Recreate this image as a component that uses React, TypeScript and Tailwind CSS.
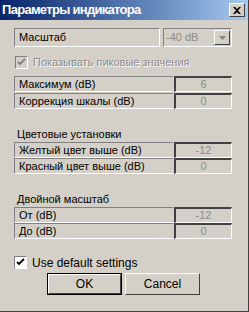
import React from "react";

const font = { fontFamily: '"Liberation Sans", Arial, sans-serif' };

function LabelRow({ label, value }: { label: string; value: string }) {
  return (
    <div className="flex h-[16px] items-stretch">
      <div className="w-[159px] border-t border-l border-t-[#808080] border-l-[#808080] border-b border-b-white flex items-center pl-[4px] text-[11px] text-black">
        {label}
      </div>
      <div className="w-[58px] ml-[1px] border-t-2 border-l-2 border-t-[#404040] border-l-[#404040] border-b border-r border-b-white border-r-white flex items-center justify-center text-[11px] text-[#8a8a8a]">
        {value}
      </div>
    </div>
  );
}

export default function App() {
  return (
    <div
      className="w-[249px] h-[312px] bg-[#d4d0c8] flex flex-col border-r border-b border-r-[#404040] border-b-[#404040] overflow-hidden"
      style={font}
    >
      <div className="h-[20px] bg-gradient-to-r from-[#0a246a] to-[#a6caf0] flex items-center justify-between pl-[2px] pr-[3px]">
        <span className="text-white font-bold text-[13px] tracking-[-0.7px]">Параметры индикатора</span>
        <div className="w-[16px] h-[14px] bg-[#d4d0c8] border border-t-white border-l-white border-b-[#404040] border-r-[#404040] flex items-center justify-center">
          <svg width="8" height="7" viewBox="0 0 8 7">
            <path d="M0 0 L2 0 L4 2 L6 0 L8 0 L5 3.5 L8 7 L6 7 L4 5 L2 7 L0 7 L3 3.5 Z" fill="black" />
          </svg>
        </div>
      </div>

      <div className="flex flex-col pl-[14px] pt-[8px]">
        <div className="flex h-[19px]">
          <div className="w-[146px] border-t border-l border-t-[#808080] border-l-[#808080] border-b border-r border-b-white border-r-white flex items-center pl-[4px] text-[11px] text-black">
            Масштаб
          </div>
          <div className="ml-[3px] w-[69px] border-t border-l border-t-[#808080] border-l-[#808080] border-b border-r border-b-white border-r-white flex items-center justify-between p-[1px]">
            <span className="text-[11px] text-[#8a8a8a] pl-[1px]">-40 dB</span>
            <div className="w-[16px] h-full bg-[#d4d0c8] border border-t-white border-l-white border-b-[#404040] border-r-[#404040] flex items-center justify-center">
              <svg width="7" height="4" viewBox="0 0 7 4">
                <path d="M0 0 L7 0 L3.5 4 Z" fill="#808080" />
              </svg>
            </div>
          </div>
        </div>

        <div className="flex items-center mt-[9px] h-[13px]">
          <div className="w-[13px] h-[13px] ml-[1px] border border-t-[#808080] border-l-[#808080] border-b-white border-r-white bg-[#d4d0c8] flex items-center justify-center">
            <svg width="9" height="9" viewBox="0 0 9 9">
              <path d="M1 4 L3 6 L8 1" stroke="#808080" strokeWidth="1.8" fill="none" />
            </svg>
          </div>
          <span className="ml-[5px] text-[11px] text-[#8a8a8a]" style={{ textShadow: "1px 1px 0 #fff" }}>
            Показывать пиковые значения
          </span>
        </div>

        <div className="flex flex-col mt-[7px]">
          <LabelRow label="Максимум (dB)" value="6" />
          <div className="h-[1px]" />
          <LabelRow label="Коррекция шкалы (dB)" value="0" />
        </div>

        <div className="text-[11px] text-black mt-[18px] pl-[3px] h-[14px] leading-[14px]">Цветовые установки</div>
        <div className="flex flex-col mt-[1px]">
          <LabelRow label="Желтый цвет выше (dB)" value="-12" />
          <LabelRow label="Красный цвет выше (dB)" value="0" />
        </div>

        <div className="text-[11px] text-black mt-[18px] pl-[3px] h-[14px] leading-[14px]">Двойной масштаб</div>
        <div className="flex flex-col mt-[1px]">
          <LabelRow label="От (dB)" value="-12" />
          <LabelRow label="До (dB)" value="0" />
        </div>

        <div className="flex items-center mt-[17px] h-[13px]">
          <div className="w-[13px] h-[13px] border border-t-[#808080] border-l-[#808080] border-b-white border-r-white bg-white flex items-center justify-center">
            <svg width="9" height="9" viewBox="0 0 9 9">
              <path d="M1 4 L3 6 L8 1" stroke="black" strokeWidth="1.8" fill="none" />
            </svg>
          </div>
          <span className="ml-[5px] text-[12px] text-black">Use default settings</span>
        </div>

        <div className="flex mt-[4px] ml-[33px] gap-[3px]">
          <div className="w-[75px] h-[22px] border border-black">
            <div className="w-full h-full border border-t-white border-l-white border-b-[#404040] border-r-[#404040] flex items-center justify-center text-[12px] text-black">
              OK
            </div>
          </div>
          <div className="w-[75px] h-[22px] border border-t-white border-l-white border-b-[#404040] border-r-[#404040] flex items-center justify-center text-[12px] text-black">
            Cancel
          </div>
        </div>
      </div>
    </div>
  );
}
